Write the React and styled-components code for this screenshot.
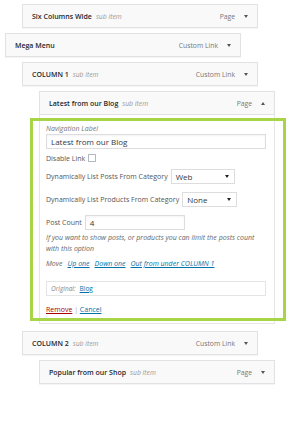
import React from 'react'
import styled, { createGlobalStyle } from 'styled-components'

const GlobalStyle = createGlobalStyle`
  html, body {
    margin: 0;
    padding: 0;
    background: #ffffff;
  }
  body {
    font-family: "Open Sans", "Noto Sans", sans-serif;
    color: #444;
  }
`

export const Page = styled.div`
  display: flex;
  flex-direction: column;
  gap: 5px;
  width: 300px;
  height: 428px;
  padding-top: 4px;
  box-sizing: border-box;
`

export const ItemWrap = styled.div`
  margin-left: ${(p) => 5 + p.depth * 17}px;
  width: 236px;
  margin-bottom: ${(p) => (p.open ? 2 : 0)}px;
`

export const Bar = styled.div`
  display: flex;
  align-items: center;
  height: 24px;
  box-sizing: border-box;
  padding: 0 9px 0 9px;
  background: #f9f9f9;
  border: 1px solid #e2e2e2;
  box-shadow: 0 1px 1px rgba(0, 0, 0, 0.04);
`

export const Title = styled.span`
  font-size: 7px;
  font-weight: 600;
  color: #23282d;
  white-space: nowrap;
`

export const Sub = styled.span`
  margin-left: 4px;
  font-size: 6.8px;
  font-style: italic;
  color: #999;
`

export const Type = styled.span`
  margin-left: auto;
  font-size: 6.8px;
  color: #777;
`

export const Toggle = styled.svg`
  width: 4px;
  height: 3px;
  margin-left: 9px;
  fill: #555;
`

export const Settings = styled.div`
  position: relative;
  display: flex;
  flex-direction: column;
  padding: 9px 8px 8px 6px;
  background: #fff;
  border: 1px solid #e5e5e5;
  border-top: none;
  font-size: 7px;
  color: #555;
`

export const Highlight = styled.div`
  position: absolute;
  left: -10px;
  right: -12px;
  top: 3px;
  bottom: 2px;
  border: 3px solid #a8d548;
  pointer-events: none;
`

export const FieldLabel = styled.div`
  line-height: 10px;
  font-style: italic;
  color: #777;
`

export const TextBox = styled.div`
  display: flex;
  align-items: center;
  width: ${(p) => p.width || '100%'};
  height: 15px;
  box-sizing: border-box;
  padding-left: 4px;
  border: 1px solid #ddd;
  background: #fff;
  font-size: ${(p) => p.size || 8}px;
  color: #32373c;
  box-shadow: inset 0 1px 2px rgba(0, 0, 0, 0.05);
`

export const Row = styled.div`
  display: flex;
  align-items: center;
  gap: 3px;
  margin-top: ${(p) => p.top || 0}px;
  min-height: ${(p) => p.h || 11}px;
  white-space: nowrap;
`

export const Check = styled.span`
  width: 8px;
  height: 8px;
  box-sizing: border-box;
  border: 1px solid #b4b9be;
  background: #fff;
`

export const Select = styled.div`
  display: flex;
  align-items: center;
  justify-content: space-between;
  width: ${(p) => p.width}px;
  height: 15px;
  box-sizing: border-box;
  padding: 0 5px 0 4px;
  border: 1px solid #ddd;
  background: #fff;
  font-size: 8px;
  color: #32373c;
`

export const Caret = styled.svg`
  width: 4px;
  height: 3px;
  fill: #222;
`

export const Help = styled.p`
  margin: 2px 0 0;
  line-height: 11px;
  font-style: italic;
  color: #666;
`

export const Link = styled.a`
  color: ${(p) => (p.danger ? '#a00' : '#0073aa')};
  text-decoration: underline;
  font-style: ${(p) => (p.italic ? 'italic' : 'normal')};
  cursor: pointer;
`

export const Move = styled.div`
  display: flex;
  gap: 5px;
  margin-top: 4px;
  line-height: 11px;
  font-style: italic;
  color: #666;
`

export const Original = styled.div`
  display: flex;
  align-items: center;
  gap: 4px;
  height: 15px;
  margin-top: 12px;
  padding-left: 4px;
  box-sizing: border-box;
  border: 1px solid #e5e5e5;
  font-size: 6.5px;
  color: #888;
`

export const Actions = styled.div`
  margin-top: 8px;
  line-height: 11px;
  color: #aaa;
`

const Arrow = ({ up }) => (
  <Toggle viewBox="0 0 4 3">
    {up ? <polygon points="0,3 4,3 2,0" /> : <polygon points="0,0 4,0 2,3" />}
  </Toggle>
)

const DropDown = ({ width, value }) => (
  <Select width={width}>
    <span>{value}</span>
    <Caret viewBox="0 0 4 3">
      <polygon points="0,0 4,0 2,3" />
    </Caret>
  </Select>
)

const MenuItem = ({ depth, title, sub, type, open, children }) => (
  <ItemWrap depth={depth} open={open}>
    <Bar>
      <Title>{title}</Title>
      {sub && <Sub>sub item</Sub>}
      <Type>{type}</Type>
      <Arrow up={open} />
    </Bar>
    {children}
  </ItemWrap>
)

export default function App() {
  return (
    <>
      <GlobalStyle />
      <Page>
        <MenuItem depth={1} title="Six Columns Wide" sub type="Page" />
        <MenuItem depth={0} title="Mega Menu" type="Custom Link" />
        <MenuItem depth={1} title="COLUMN 1" sub type="Custom Link" />
        <MenuItem depth={2} title="Latest from our Blog" sub type="Page" open>
          <Settings>
            <Highlight />
            <FieldLabel>Navigation Label</FieldLabel>
            <TextBox>Latest from our Blog</TextBox>
            <Row top={3} h={12}>
              Disable Link <Check />
            </Row>
            <Row top={5} h={15}>
              Dynamically List Posts From Category
              <DropDown width={64} value="Web" />
            </Row>
            <Row top={8} h={15}>
              Dynamically List Products From Category
              <DropDown width={55} value="None" />
            </Row>
            <Row top={8} h={15}>
              Post Count
              <TextBox width="100px">4</TextBox>
            </Row>
            <Help>
              If you want to show posts, or products you can limit the posts count
              <br />
              with this option
            </Help>
            <Move>
              <span>Move</span>
              <Link italic>Up one</Link>
              <Link italic>Down one</Link>
              <Link italic>Out from under COLUMN 1</Link>
            </Move>
            <Original>
              <i>Original:</i>
              <Link>Blog</Link>
            </Original>
            <Actions>
              <Link danger>Remove</Link> | <Link>Cancel</Link>
            </Actions>
          </Settings>
        </MenuItem>
        <MenuItem depth={1} title="COLUMN 2" sub type="Custom Link" />
        <MenuItem depth={2} title="Popular from our Shop" sub type="Page" />
      </Page>
    </>
  )
}
